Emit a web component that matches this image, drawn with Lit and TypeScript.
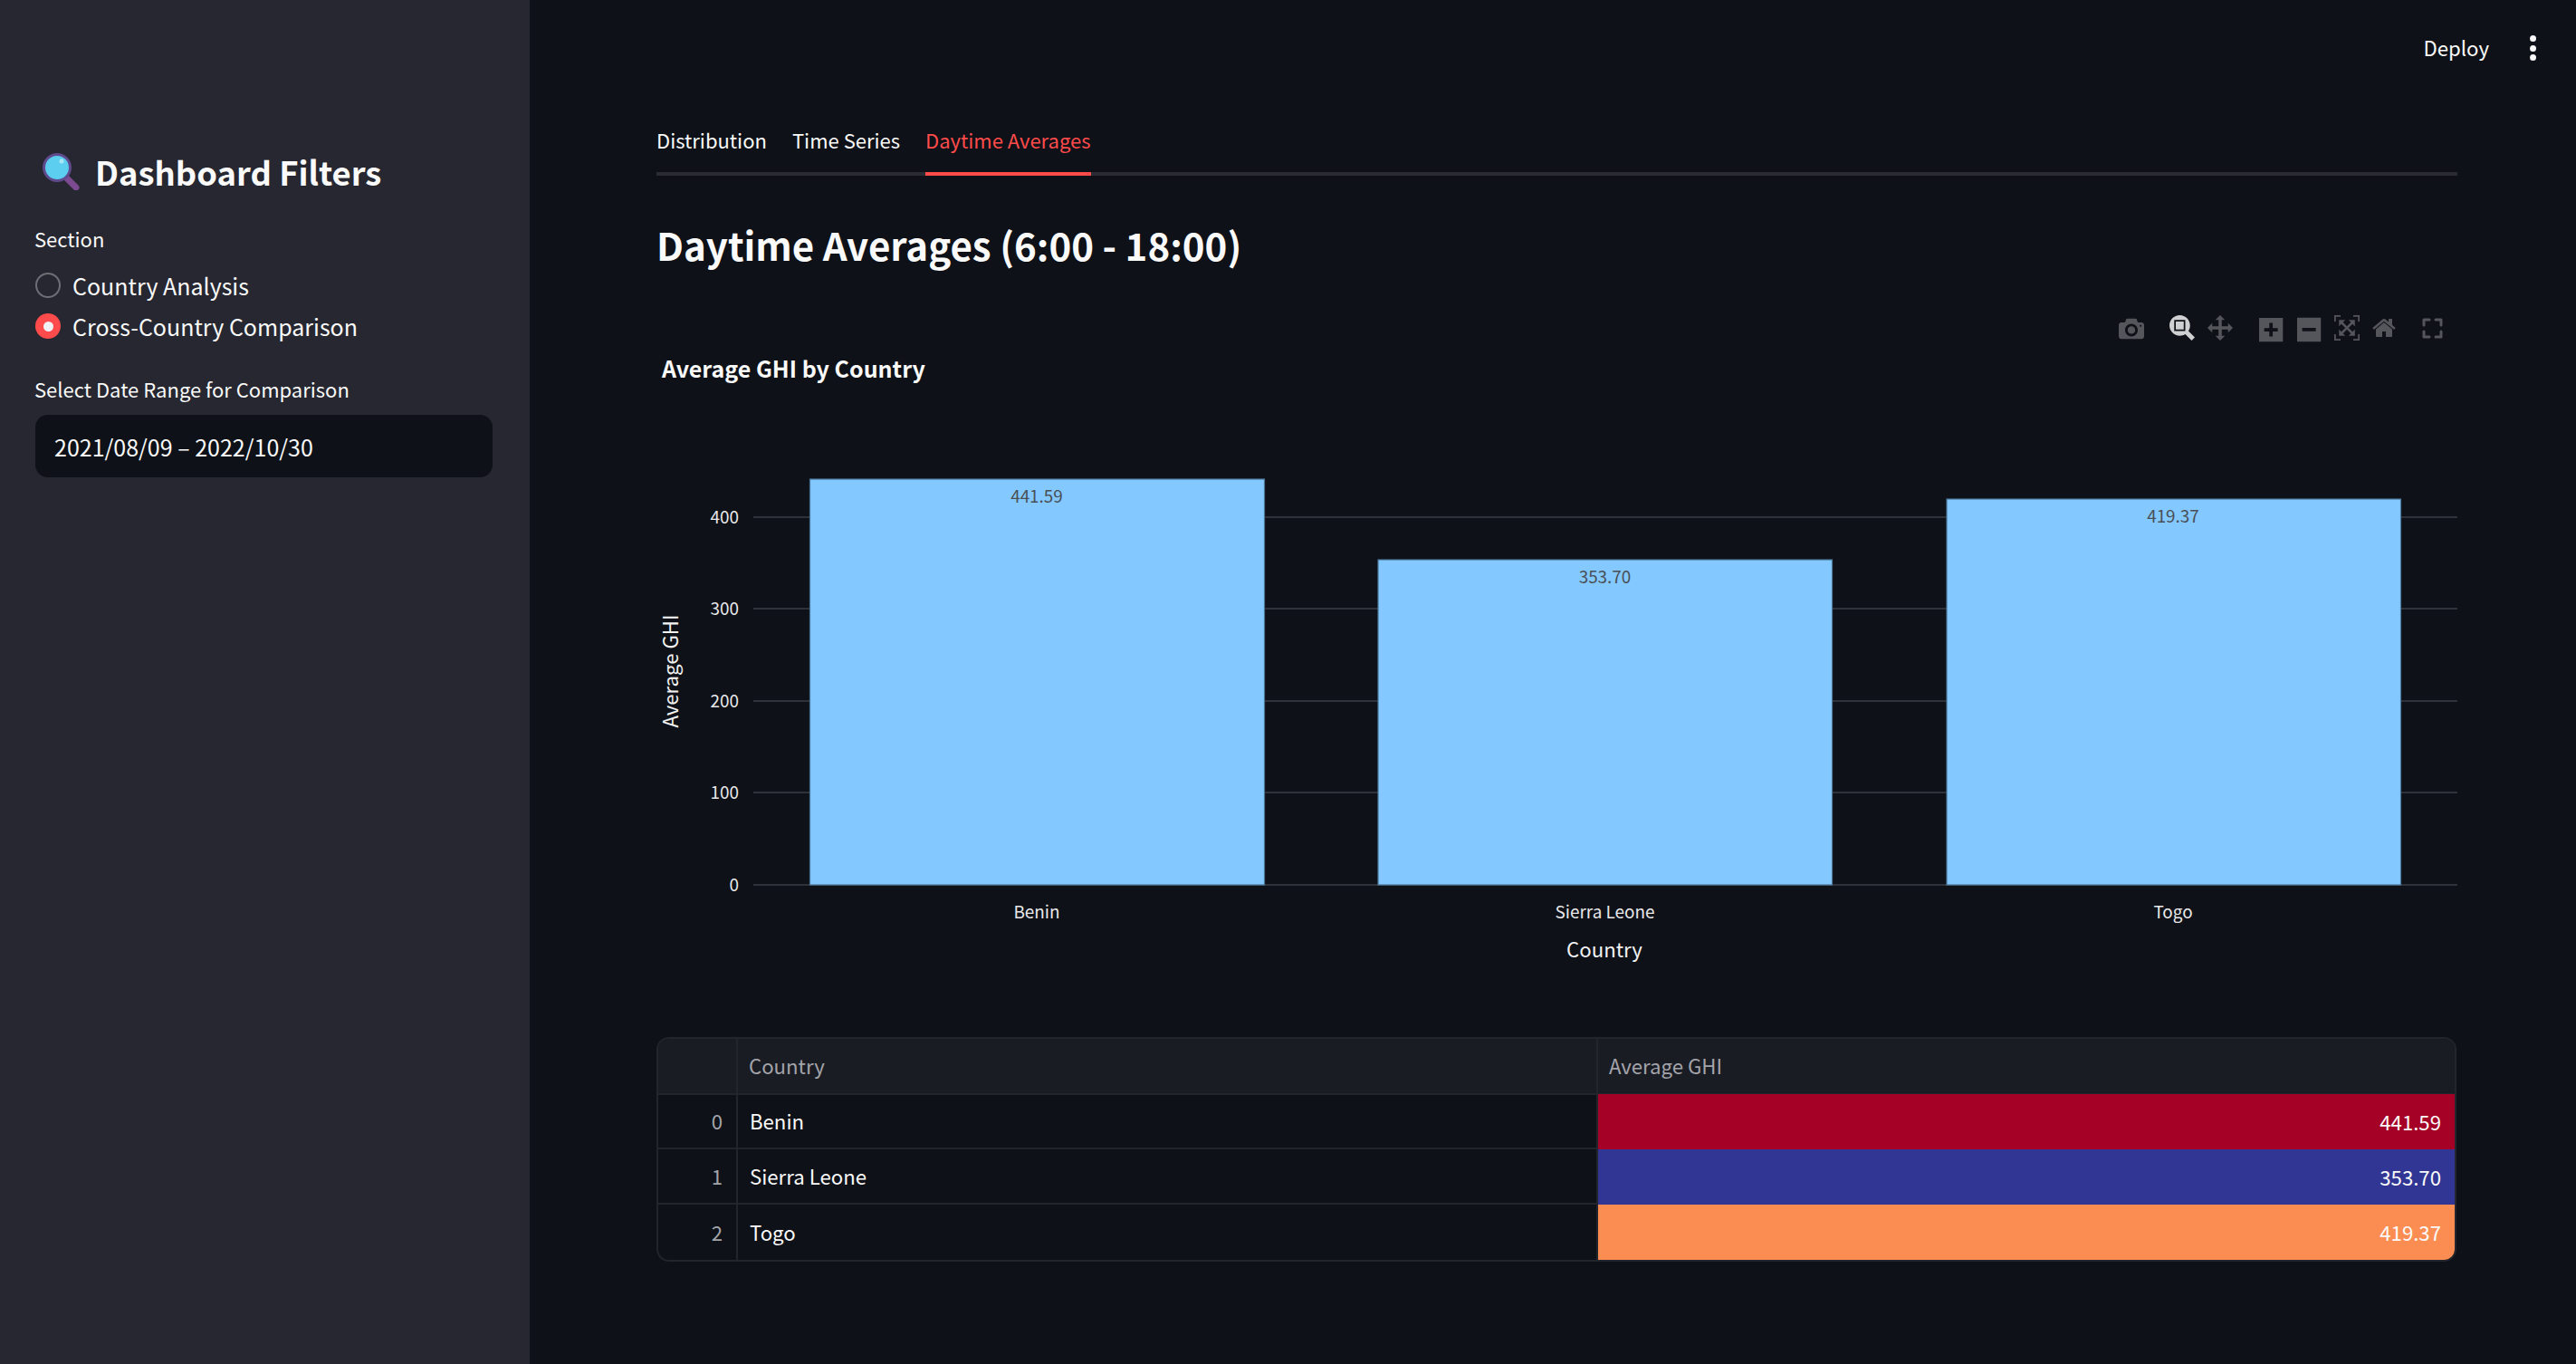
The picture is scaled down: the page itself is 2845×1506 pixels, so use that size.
import { LitElement, html, css, svg } from "lit";
import { customElement } from "lit/decorators.js";

const FONT = `"Noto Sans CJK JP", "Liberation Sans", sans-serif`;

const bars = [
  { name: "Benin", v: "441.59", x: 894.5, w: 502, top: 529, cx: 1145, ly: 548 },
  { name: "Sierra Leone", v: "353.70", x: 1522, w: 501.5, top: 618, cx: 1772.5, ly: 637 },
  { name: "Togo", v: "419.37", x: 2150, w: 501.5, top: 551, cx: 2400, ly: 570 },
];
const grid = [
  { y: 571, t: "400" },
  { y: 672, t: "300" },
  { y: 774, t: "200" },
  { y: 875, t: "100" },
  { y: 977, t: "0" },
];
const rows = [
  { i: 0, n: "Benin", v: "441.59", c: "#a50026" },
  { i: 1, n: "Sierra Leone", v: "353.70", c: "#313695" },
  { i: 2, n: "Togo", v: "419.37", c: "#fb8d53" },
];

const icon = (x: number, y: number, size: number, d: string, cls = "mb", unit = 1000) => svg`
  <path class=${cls} transform="translate(${x} ${y}) scale(${size / unit} ${-size / unit}) translate(0 -850)" d=${d}></path>`;

const ICONS = {
  camera: "m500 450c-83 0-150-67-150-150 0-83 67-150 150-150 83 0 150 67 150 150 0 83-67 150-150 150z m400 150h-120c-16 0-34 13-39 29l-31 93c-6 15-23 28-40 28h-340c-16 0-34-13-39-28l-31-94c-6-15-23-28-40-28h-120c-55 0-100-45-100-100v-450c0-55 45-100 100-100h800c55 0 100 45 100 100v450c0 55-45 100-100 100z m-400-550c-138 0-250 112-250 250 0 138 112 250 250 250 138 0 250-112 250-250 0-138-112-250-250-250z m365 380c-19 0-35 16-35 35 0 19 16 35 35 35 19 0 35-16 35-35 0-19-16-35-35-35z",
  zoom: "m1000-25l-250 251c40 63 63 138 63 218 0 224-182 406-407 406-224 0-406-182-406-406s183-406 407-406c80 0 155 22 218 62l250-250 125 125z m-812 250l0 438 437 0 0-438-437 0z m62 375l313 0 0-312-313 0 0 312z",
  pan: "m1000 350l-187 188 0-125-250 0 0 250 125 0-188 187-188-187 125 0 0-250-250 0 0 125-187-188 187-188 0 125 250 0 0-250-125 0 188-187 188 187-125 0 0 250 250 0 0-125 187 188z",
  plus: "m1 787l0-875 875 0 0 875-875 0z m687-500l-187 0 0-187-125 0 0 187-188 0 0 125 188 0 0 187 125 0 0-187 187 0 0-125z",
  minus: "m0 788l0-876 875 0 0 876-875 0z m688-500l-500 0 0 125 500 0 0-125z",
  auto: "m250 850l-187 0-63 0 0-62 0-188 63 0 0 188 187 0 0 62z m688 0l-188 0 0-62 188 0 0-188 62 0 0 188 0 62-62 0z m-875-938l0 188-63 0 0-188 0-62 63 0 187 0 0 62-187 0z m875 188l0-188-188 0 0-62 188 0 62 0 0 62 0 188-62 0z m-125 188l-1 0-93-94-156 156 156 156 92-93 2 0 0 250-250 0 0-2 93-92-156-156-156 156 94 92 0 2-250 0 0-250 0 0 93 93 157-156-157-156-93 94 0 0 0-250 250 0 0 0-94 93 156 157 156-157-93-93 0 0 250 0 0 250z",
  home: "m786 296v-267q0-15-11-26t-25-10h-214v214h-143v-214h-214q-15 0-25 10t-11 26v267q0 1 0 2t0 2l321 264 321-264q1-1 1-4z m124 39l-34-41q-5-5-12-6h-2q-7 0-12 3l-386 322-386-322q-7-4-13-4-7 2-12 7l-35 41q-4 5-3 13t6 12l401 334q18 15 42 15t43-15l136-114v109q0 8 5 13t13 5h107q8 0 13-5t5-13v-227l122-102q5-5 6-12t-4-13z",
};

@customElement("app-root")
export class AppRoot extends LitElement {
  static styles = css`
    :host {
      display: flex;
      width: 2845px;
      height: 1506px;
      overflow: hidden;
      background: #0e1117;
      color: #fafafa;
      font-family: ${css([FONT] as unknown as TemplateStringsArray)};
    }
    .side {
      width: 585px;
      flex: none;
      box-sizing: border-box;
      background: #262730;
      padding: 160px 41px 0 39px;
    }
    .side-title {
      display: flex;
      align-items: center;
      height: 58px;
      gap: 17px;
      padding-left: 8px;
      font-size: 36.4px;
      font-weight: 600;
      line-height: 58px;
    }
    .side-title svg { width: 41px; height: 41px; flex: none; }
    .label {
      font-size: 22px;
      line-height: 30px;
      margin-left: -1px;
    }
    .sec-label { margin-top: 30px; }
    .radios {
      display: flex;
      flex-direction: column;
      gap: 17px;
      margin-top: 23px;
    }
    .radio {
      display: flex;
      align-items: center;
      gap: 13px;
      height: 28px;
      font-size: 25px;
      line-height: 28px;
    }
    .dot {
      box-sizing: border-box;
      width: 28px;
      height: 28px;
      border-radius: 50%;
      border: 2px solid #6e6f76;
      display: flex;
      align-items: center;
      justify-content: center;
    }
    .dot.on { border: none; background: #ff4b4b; }
    .dot.on::after {
      content: "";
      width: 11px;
      height: 11px;
      border-radius: 50%;
      background: #f0f2f6;
    }
    .date-label { margin-top: 40px; }
    .date {
      box-sizing: border-box;
      margin-top: 14px;
      height: 69px;
      border-radius: 14px;
      background: #0e1117;
      padding-left: 21px;
      display: flex;
      align-items: center;
      font-size: 25px;
    }
    .main {
      flex: 1;
      min-width: 0;
      box-sizing: border-box;
      padding: 0 131px 0 140px;
      position: relative;
    }
    .top {
      height: 106px;
      margin-right: -131px;
      display: flex;
      align-items: center;
      justify-content: flex-end;
      padding-right: 44px;
      gap: 45px;
    }
    .deploy { font-size: 22.2px; line-height: 30px; margin-top: -2px; }
    .kebab { display: flex; flex-direction: column; gap: 3.5px; }
    .kebab i { width: 7px; height: 7px; border-radius: 50%; background: #fafafa; display: block; }
    .tabs {
      display: flex;
      gap: 28px;
      height: 88px;
      box-sizing: border-box;
      border-bottom: 4px solid #2a2b33;
    }
    .tab {
      height: 88px;
      box-sizing: border-box;
      padding-top: 30px;
      font-size: 22px;
      line-height: 36px;
    }
    .tab.on {
      color: #ff4b4b;
      border-bottom: 4px solid #ff4b4b;
    }
    h2 {
      margin: 44px 0 0;
      padding-left: 0;
      font-size: 42px;
      font-weight: 600;
      line-height: 64px;
    }
    .chart {
      display: block;
      width: 1989px;
      height: 780px;
      margin-top: 28px;
    }
    .chart text { font-family: ${css([FONT] as unknown as TemplateStringsArray)}; }
    .mb { fill: #55565c; }
    .mb.active { fill: #cfd0d2; }
    .fs { fill: none; stroke: #55565c; stroke-width: 3; stroke-linecap: round; stroke-linejoin: round; }
    .grid { stroke: #2f323b; stroke-width: 2; }
    .bar { fill: #83c9ff; stroke: #4b7597; stroke-width: 1.2; }
    .tick { fill: #e8e8ea; font-size: 18.9px; }
    .val { fill: #4a4f55; font-size: 18.9px; text-anchor: middle; }
    .axis { fill: #f2f2f3; font-size: 22.2px; text-anchor: middle; }
    .title { fill: #fafafa; font-size: 25px; font-weight: 600; }
    .table {
      box-sizing: border-box;
      margin-top: 35px;
      width: 1988px;
      border: 2px solid #23252d;
      border-radius: 14px;
      overflow: hidden;
      display: grid;
      grid-template-columns: 88px 950px 1fr;
      grid-auto-rows: 61px;
      font-size: 22.2px;
      line-height: 30px;
    }
    .table > div {
      box-sizing: border-box;
      display: flex;
      align-items: center;
      padding-bottom: 2px;
      border-bottom: 2px solid #23252d;
      border-right: 2px solid #23252d;
    }
    .th { background: #1a1c24; color: #a3a4aa; padding-left: 12px; }
    .th.hd { height: 62px; }
    .idx { color: #a3a4aa; justify-content: flex-end; padding-right: 15px; }
    .name { padding-left: 13px; }
    .num {
      justify-content: flex-end;
      padding-right: 15px;
      border-right: none !important;
      border-bottom: none !important;
    }
    .last { border-bottom: none !important; }
    .th.end { border-right: none; }
  `;

  private chart() {
    return svg`
      <svg class="chart" viewBox="725 330 1989 780" xmlns="http://www.w3.org/2000/svg">
        ${icon(2340, 349, 28, ICONS.camera)}
        ${icon(2396, 348, 28, ICONS.zoom, "mb active")}
        ${icon(2438, 348, 28, ICONS.pan)}
        ${icon(2495, 349, 30, ICONS.plus)}
        ${icon(2537, 349, 30, ICONS.minus)}
        ${icon(2578, 348, 28, ICONS.auto)}
        ${icon(2620, 348, 28, ICONS.home)}
        <path class="fs" d="M2677 359v-6h6 M2690 353h6v6 M2696 366v6h-6 M2683 372h-6v-6"></path>
        <text class="title" x="731" y="417">Average GHI by Country</text>
        ${grid.map(
          (g) => svg`
          <line class="grid" x1="832" x2="2714" y1=${g.y} y2=${g.y}></line>
          <text class="tick" x="816" y=${g.y + 7} text-anchor="end">${g.t}</text>`
        )}
        ${bars.map(
          (b) => svg`
          <rect class="bar" x=${b.x} y=${b.top} width=${b.w} height=${977 - b.top}></rect>
          <text class="val" x=${b.cx} y=${b.ly + 7}>${b.v}</text>
          <text class="tick" x=${b.cx} y="1014" text-anchor="middle">${b.name}</text>`
        )}
        <text class="axis" x="1772" y="1057">Country</text>
        <text class="axis" transform="translate(749 741) rotate(-90)">Average GHI</text>
      </svg>`;
  }

  render() {
    return html`
      <aside class="side">
        <div class="side-title">
          <svg viewBox="0 0 41 41" aria-hidden="true">
            <path d="M27 28 L37 38" stroke="#7b4a90" stroke-width="7" stroke-linecap="round"></path>
            <circle cx="16" cy="16" r="14.5" fill="#5ccff0" stroke="#5f4a8e" stroke-width="3"></circle>
            <circle cx="21" cy="9" r="2.5" fill="#a9e6f6"></circle>
          </svg>
          <span>Dashboard Filters</span>
        </div>
        <div class="label sec-label">Section</div>
        <div class="radios">
          <div class="radio"><span class="dot"></span><span>Country Analysis</span></div>
          <div class="radio"><span class="dot on"></span><span>Cross-Country Comparison</span></div>
        </div>
        <div class="label date-label">Select Date Range for Comparison</div>
        <div class="date">2021/08/09 – 2022/10/30</div>
      </aside>
      <main class="main">
        <div class="top">
          <span class="deploy">Deploy</span>
          <span class="kebab"><i></i><i></i><i></i></span>
        </div>
        <div class="tabs">
          <div class="tab">Distribution</div>
          <div class="tab">Time Series</div>
          <div class="tab on">Daytime Averages</div>
        </div>
        <h2>Daytime Averages (6:00 - 18:00)</h2>
        ${this.chart()}
        <div class="table">
          <div class="th hd"></div>
          <div class="th hd">Country</div>
          <div class="th hd end">Average GHI</div>
          ${rows.map(
            (r, i) => html`
              <div class="idx ${i === 2 ? "last" : ""}">${r.i}</div>
              <div class="name ${i === 2 ? "last" : ""}">${r.n}</div>
              <div class="num" style="background:${r.c}">${r.v}</div>
            `
          )}
        </div>
      </main>
    `;
  }
}
